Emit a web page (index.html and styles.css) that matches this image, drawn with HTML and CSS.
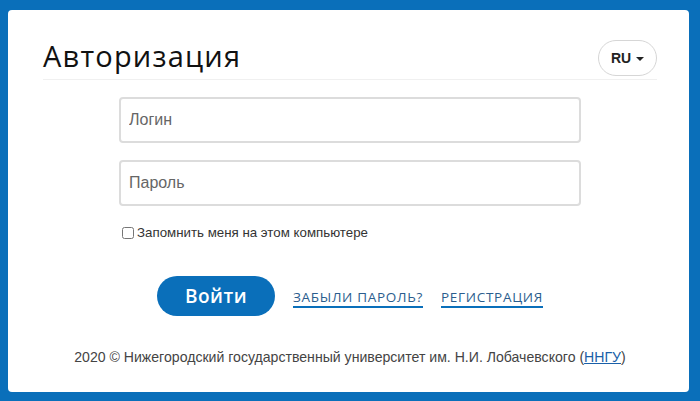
FILE: index.html
```html
<!DOCTYPE html>
<html lang="ru">
<head>
    <meta charset="UTF-8">
    <meta name="viewport" content="width=device-width, initial-scale=1.0">
    <title>Авторизация</title>
    <link rel="stylesheet" href="styles.css">
</head>
<body>
    <div class="card">
        <div class="card-header">
            <h1>Авторизация</h1>
            <button class="lang-btn">RU <span class="caret"></span></button>
        </div>

        <form class="login-form" onsubmit="return false">
            <input type="text" class="field" placeholder="Логин">
            <input type="password" class="field" placeholder="Пароль">

            <label class="remember">
                <input type="checkbox"> Запомнить меня на этом компьютере
            </label>

            <div class="actions">
                <button class="submit-btn">Войти</button>
                <a href="#" class="link">ЗАБЫЛИ ПАРОЛЬ?</a>
                <a href="#" class="link">РЕГИСТРАЦИЯ</a>
            </div>
        </form>

        <p class="footer">2020 © Нижегородский государственный университет им. Н.И. Лобачевского (<a href="#">ННГУ</a>)</p>
    </div>
</body>
</html>
```

FILE: styles.css
```css
html, body {
    height: 100%;
}
body {
    margin: 0;
    padding: 10px 11px 9px 8px;
    box-sizing: border-box;
    background-color: #0a6fba;
    font-family: "Liberation Sans", Arial, sans-serif;
    color: #333;
}
.card {
    height: 100%;
    box-sizing: border-box;
    background: #fff;
    border-radius: 4px;
    padding: 30px 32px 0 35px;
}
.card-header {
    display: flex;
    align-items: center;
    justify-content: space-between;
    height: 36px;
    padding-bottom: 3px;
    border-bottom: 1px solid #f0f0f0;
}
h1 {
    margin: 0 0 5px;
    font-family: "Open Sans", sans-serif;
    font-weight: 400;
    font-size: 29px;
    line-height: 34px;
    letter-spacing: 1.2px;
    color: #111;
}
.lang-btn {
    height: 36px;
    width: 59px;
    border: 1px solid #d6d6d6;
    border-radius: 18px;
    background: #fff;
    font-family: "Liberation Sans", Arial, sans-serif;
    font-weight: bold;
    font-size: 14px;
    color: #222;
    cursor: pointer;
    padding: 0;
}
.caret {
    display: inline-block;
    width: 0;
    height: 0;
    margin-left: 1px;
    vertical-align: middle;
    border-top: 4px solid #222;
    border-left: 4px solid transparent;
    border-right: 4px solid transparent;
}
.login-form {
    width: 462px;
    margin: 17px auto 0;
    display: flex;
    flex-direction: column;
}
.field {
    height: 46px;
    box-sizing: border-box;
    padding: 0 8px;
    border: 2px solid #dcdcdc;
    border-radius: 4px;
    font-family: "Liberation Sans", Arial, sans-serif;
    font-size: 16px;
    color: #333;
    outline: none;
}
.field + .field {
    margin-top: 17px;
}
.field::placeholder {
    color: #666;
}
.remember {
    display: flex;
    align-items: center;
    margin-top: 19px;
    padding-left: 3px;
    font-size: 13.3px;
    line-height: 16px;
    color: #333;
}
.remember input {
    margin: 0 3px 0 0;
    width: 12px;
    height: 12px;
}
.actions {
    display: flex;
    justify-content: center;
    align-items: center;
    gap: 18px;
    margin-top: 35px;
}
.submit-btn {
    width: 118px;
    height: 40px;
    border: none;
    border-radius: 20px;
    background-color: #0a6fba;
    color: #fff;
    font-family: "Open Sans", sans-serif;
    font-weight: 600;
    font-size: 19px;
    letter-spacing: 0.5px;
    cursor: pointer;
}
.link {
    font-family: "Open Sans", sans-serif;
    font-size: 13.5px;
    line-height: 17px;
    letter-spacing: 0.7px;
    color: #2b5d8e;
    text-decoration: none;
    border-bottom: 2px solid #0a6fba;
    margin-top: 4px;
}
.footer {
    margin: 32px 0 0;
    text-align: center;
    font-size: 14.1px;
    line-height: 18px;
    color: #444;
}
.footer a {
    color: #1a5fa8;
}
```
